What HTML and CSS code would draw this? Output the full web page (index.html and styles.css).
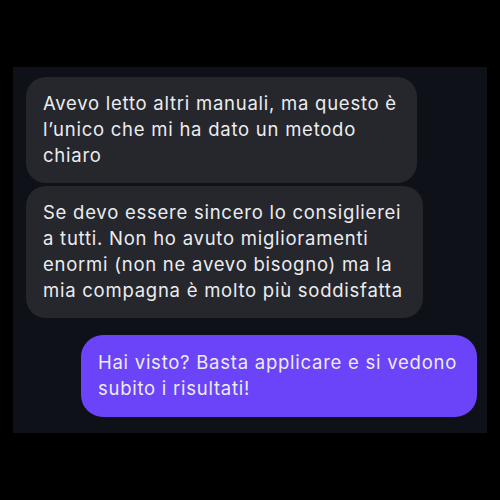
FILE: index.html
```html
<!DOCTYPE html>
<html lang="it">
<head>
<meta charset="utf-8">
<link rel="stylesheet" href="styles.css">
</head>
<body>
<div class="page">
  <div class="panel">
    <div class="bubble them">Avevo letto altri manuali, ma questo è<br>l’unico che mi ha dato un metodo<br>chiaro</div>
    <div class="bubble them second">Se devo essere sincero lo consiglierei<br>a tutti. Non ho avuto miglioramenti<br>enormi (non ne avevo bisogno) ma la<br>mia compagna è molto più soddisfatta</div>
    <div class="bubble me">Hai visto? Basta applicare e si vedono<br>subito i risultati!</div>
    <div class="edge"></div>
  </div>
</div>
</body>
</html>
```
FILE: styles.css
```css
html, body {
  margin: 0;
  padding: 0;
  background: #000;
}
.page {
  padding: 67px 13px;
}
.panel {
  background: #0e1118;
  height: 366px;
  box-sizing: border-box;
  padding: 10px 10px 0 13px;
  display: flex;
  flex-direction: column;
}
.bubble {
  width: fit-content;
  font-family: Inter, "Liberation Sans", sans-serif;
  font-size: 18.5px;
  letter-spacing: 0.75px;
  line-height: 26px;
  color: #ececef;
  padding: 13px 20px 15px 17px;
  border-radius: 20px;
}
.them {
  background: #25272d;
}
.second {
  margin-top: 3px;
}
.me {
  align-self: flex-end;
  background: #6b43f8;
  margin-top: 17px;
  padding: 14px 20px 16px 17px;
  border-radius: 22px;
}
.edge {
  margin-top: 16px;
  margin-left: 19px;
  width: 348px;
  height: 1px;
  background: linear-gradient(90deg, rgba(60,64,70,0), #2c3036 10%, #2c3036 85%, rgba(60,64,70,0));
}
```
